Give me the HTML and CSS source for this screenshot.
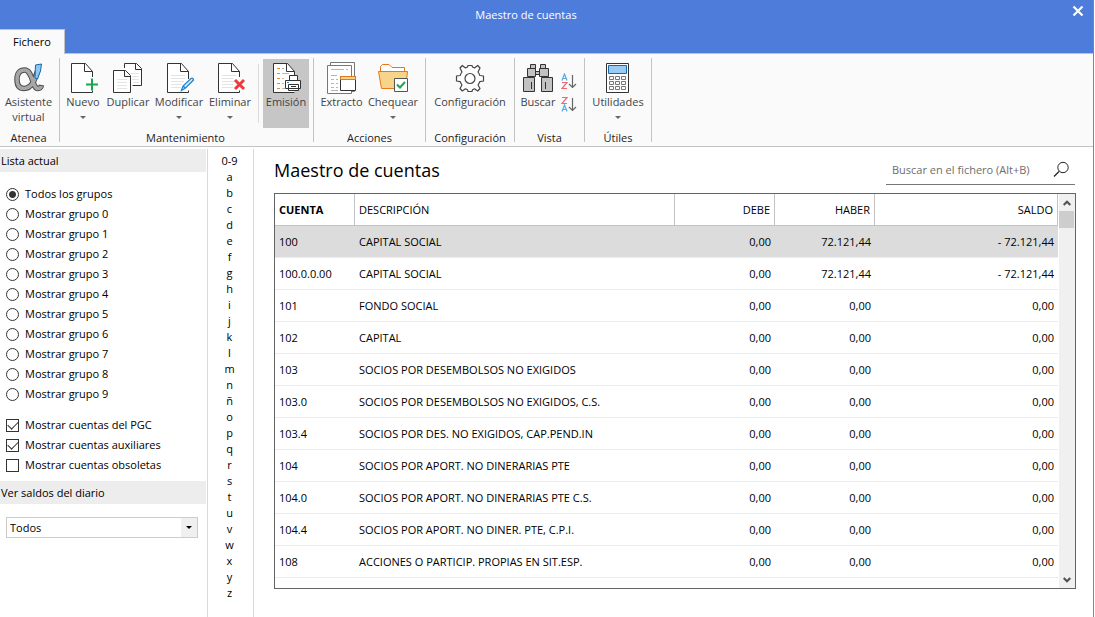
FILE: index.html
```html
<!DOCTYPE html>
<html lang="es">
<head>
<meta charset="utf-8">
<title>Maestro de cuentas</title>
<meta name="viewport" content="width=device-width, initial-scale=1">
<link rel="stylesheet" href="styles.css">
</head>
<body>
<div class="window">
  <header class="titlebar">
    <div class="title-row">
      <span class="title">Maestro de cuentas</span>
      <button class="close" type="button" aria-label="Cerrar">
        <svg width="12" height="12" viewBox="0 0 12 12"><path d="M1.500 1.500 10.500 10.500M10.500 1.500 1.500 10.500" stroke="#fff" stroke-width="2.200"/></svg>
      </button>
    </div>
    <button class="tab" type="button">Fichero</button>
  </header>

  <nav class="ribbon">
    <section class="group g-atenea">
      <div class="tools">
        <button class="tool" type="button">
          <svg width="32" height="32" viewBox="0 0 32 32" fill="none">
            <path d="M24.500 9C22 17 19 26.500 11 26.500 6 26.500 4 23 4 17.500 4 11 7 8 11.500 8 20 8 19 26.500 25 26.500 27 26.500 28 25.500 28.500 23" stroke="#4d4d4d" stroke-width="5.500"/>
            <path d="M24.500 10C22 17 19 26.500 11 26.500 6 26.500 4 23 4 17.500 4 11 7 8 11.500 8 20 8 19 26.500 25 26.500 27 26.500 28 25.500 28.300 24" stroke="#a6a6a6" stroke-width="3.500"/>
            <path d="M28.500 2 22.500 3 22 16 24.500 17 27.500 9Z" fill="#8ec8f2" stroke="#1769aa"/>
          </svg>
          <span>Asistente<br>virtual</span>
        </button>
      </div>
      <h2>Atenea</h2>
    </section>

    <section class="group g-mant">
      <div class="tools">
        <button class="tool w42" type="button">
          <svg width="32" height="32" viewBox="0 0 32 32" fill="none">
            <path d="M25.500 15V9.500L18.500 1.500H4.500V30.500H25.500V28.500M17.500 1.500V9.500H25.500" fill="#fff" stroke="#333"/>
            <path d="M25 16.500V28M19 22.500H31" stroke="#fafafa" stroke-width="4"/>
            <path d="M25 16.500V28.500M19 22.500H31" stroke="#17a84b" stroke-width="2"/>
          </svg>
          <span>Nuevo</span><i class="caret"></i>
        </button>
        <button class="tool w48" type="button">
          <svg width="32" height="32" viewBox="0 0 32 32" fill="none">
            <path d="M12.500 6V1.500H24.500L29.500 6.500V23.500H20.500M23.500 1.500V7.500H29.500" fill="#fff" stroke="#333"/>
            <path d="M18 11.500H27M20 14.500H27M20 17.500H27M21 20.500H27" stroke="#e4e4e4"/>
            <path d="M1.500 8.500H13.500L18.500 13.500V30.500H1.500ZM12.500 8.500V14.500H18.500" fill="#fff" stroke="#333"/>
            <path d="M5 17.500H15M5 20.500H15M5 23.500H15M5 26.500H15" stroke="#e4e4e4"/>
          </svg>
          <span>Duplicar</span>
        </button>
        <button class="tool w54" type="button">
          <svg width="32" height="32" viewBox="0 0 32 32" fill="none">
            <path d="M25.500 17V9.500L18.500 1.500H4.500V30.500H25.500V28.500M17.500 1.500V9.500H25.500" fill="#fff" stroke="#333"/>
            <path d="M8 13.500H22M8 16.500H22M8 19.500H21M8 22.500H19M8 25.500H18" stroke="#e4e4e4"/>
            <path d="M18.500 28.500 20 24 28 16.500Q30 15.500 30.500 18L22.500 26ZM20 24 22.500 26" fill="#d7ecfa" stroke="#1f86cf" stroke-width="1.300"/>
          </svg>
          <span>Modificar</span><i class="caret"></i>
        </button>
        <button class="tool w48" type="button">
          <svg width="32" height="32" viewBox="0 0 32 32" fill="none">
            <path d="M25.500 15V9.500L18.500 1.500H4.500V30.500H25.500V28.500M17.500 1.500V9.500H25.500" fill="#fff" stroke="#333"/>
            <path d="M8 13.500H22M8 16.500H19M8 19.500H20M8 22.500H19M8 25.500H19" stroke="#e4e4e4"/>
            <path d="M21 18 30 27M30 18 21 27" stroke="#f03a3a" stroke-width="3"/>
          </svg>
          <span>Eliminar</span><i class="caret"></i>
        </button>
        <span class="divider"></span>
        <button class="tool w46 selected" type="button">
          <svg width="32" height="32" viewBox="0 0 32 32" fill="none">
            <path d="M24.500 13V9.500L17.500 1.500H3.500V30.500H24.500M16.500 1.500V9.500H24.500" fill="#fff" stroke="#333"/>
            <path d="M7 6.500H10M7 11.500H10M7 16.500H10M7 21.500H10M7 26.500H10" stroke="#f08a1d"/>
            <path d="M12 6.500H14M12 11.500H19M12 16.500H14M12 21.500H14M12 26.500H15" stroke="#b9b9b9"/>
            <path d="M19.500 18.500V13.500H27.500V18.500M15.500 18.500H30.500V26.500H15.500ZM18.500 22.500H28.500V28.500H18.500ZM21 24.500H26M21 26.500H26" fill="#fff" stroke="#333"/>
            <path d="M17 20.500H19" stroke="#1f86cf"/>
          </svg>
          <span>Emisión</span>
        </button>
      </div>
      <h2>Mantenimiento</h2>
    </section>

    <section class="group g-acc">
      <div class="tools">
        <button class="tool w47" type="button">
          <svg width="32" height="32" viewBox="0 0 32 32" fill="none">
            <path d="M4.500 3V.500H28.500V29.500H26" stroke="#777" fill="#fff"/>
            <path d="M1.500 3.500H25.500V31.500H1.500Z" fill="#fff" stroke="#777"/>
            <path d="M5 7.500H18M20 7.500H22M5 13.500H11M5 17.500H8M10 17.500H12M5 21.500H8M10 21.500H12M5 25.500H8M10 25.500H12M5 28.500H12" stroke="#b5b5b5"/>
            <path d="M14.500 14.500H29.500V28.500H14.500Z" fill="#fff" stroke="#333"/>
            <path d="M14.500 14.500H29.500V17.500H14.500Z" fill="#f6d48a" stroke="#e8761c"/>
          </svg>
          <span>Extracto</span>
        </button>
        <button class="tool w56" type="button">
          <svg width="32" height="32" viewBox="0 0 32 32" fill="none">
            <path d="M3.500 9V4.500L5.500 2.500H12L15 5.500H27.500V9" fill="#fff" stroke="#e8761c"/>
            <path d="M1.500 9.500H30.500L28.500 26.500H4.500Z" fill="#f6d48a" stroke="#e8761c"/>
            <path d="M17.500 16.500H30.500V29.500H17.500Z" fill="#fff" stroke="#555"/>
            <path d="M20 22.500 23 25.500 28 20" stroke="#17a84b" stroke-width="2"/>
          </svg>
          <span>Chequear</span><i class="caret"></i>
        </button>
      </div>
      <h2>Acciones</h2>
    </section>

    <section class="group g-conf">
      <div class="tools">
        <button class="tool" type="button">
          <svg width="32" height="32" viewBox="0 0 32 32" fill="none" stroke="#444" stroke-width="1.200" stroke-linejoin="round">
            <path d="M8.300 3.500 11.500 6Q12.700 5.400 13.500 5L14 3.500H18L18.500 5 20.500 6 23.700 3.500 26 6 24 10Q25.500 12 25.800 13.500L29.500 14V19L25.800 19.700Q25.500 21 24 23L26 26.500 23.700 29 20.500 26.800 18.500 27.700 18 29.500H14L13.500 27.700 11.500 26.800 8.300 29 6 26.500 8 23Q6.500 21 6.200 19.700L2.500 19V14L6.200 13.500Q6.500 12 8 10L6 6Z" fill="#fff"/>
            <circle cx="16" cy="16.500" r="5"/>
          </svg>
          <span>Configuración</span>
        </button>
      </div>
      <h2>Configuración</h2>
    </section>

    <section class="group g-vista">
      <div class="tools">
        <button class="tool w40" type="button">
          <svg width="32" height="32" viewBox="0 0 32 32" fill="#c2c2c2" stroke="#333">
            <path d="M8.500 2.500H13.500V6.500H8.500ZM18.500 2.500H23.500V6.500H18.500ZM5.500 6.500H13.500V14.500H5.500ZM17.500 6.500H26.500V14.500H17.500ZM13.500 9.500H17.500V12.500H13.500ZM1.500 15.500H12.500V29.500H1.500ZM19.500 15.500H30.500V29.500H19.500ZM9.500 20V27M23.500 20V27"/>
          </svg>
          <span>Buscar</span>
        </button>
        <div class="sorts">
          <button type="button" aria-label="Orden ascendente">
            <svg width="16" height="17" viewBox="0 0 16 17" fill="none" stroke-width="1.200">
              <path d="M1 7.500 3.500 1 6 7.500M2 5.500H5" stroke="#58aee0"/><path d="M1 9.500H6L1 15.500H6" stroke="#f06a70"/>
              <path d="M11.500 2V14M8 11 11.500 14.500 15 11" stroke="#666"/>
            </svg>
          </button>
          <button type="button" aria-label="Orden descendente">
            <svg width="16" height="17" viewBox="0 0 16 17" fill="none" stroke-width="1.200">
              <path d="M1 1.500H6L1 7.500H6" stroke="#f06a70"/><path d="M1 15.500 3.500 9 6 15.500M2 13.500H5" stroke="#58aee0"/>
              <path d="M11.500 2V14M8 11 11.500 14.500 15 11" stroke="#666"/>
            </svg>
          </button>
        </div>
      </div>
      <h2>Vista</h2>
    </section>

    <section class="group g-util">
      <div class="tools">
        <button class="tool" type="button">
          <svg width="32" height="32" viewBox="0 0 32 32" fill="none">
            <path d="M4.500 1.500H26.500V30.500H4.500Z" fill="#fff" stroke="#333"/>
            <path d="M6.500 3.500H24.500V11.500H6.500Z" fill="#9accf3" stroke="#1769aa"/>
            <path d="M7.500 14.500H11.500V17.500H7.500ZM13.500 14.500H17.500V17.500H13.500ZM19.500 14.500H23.500V17.500H19.500ZM7.500 19.500H11.500V22.500H7.500ZM13.500 19.500H17.500V22.500H13.500ZM19.500 19.500H23.500V22.500H19.500ZM7.500 24.500H11.500V27.500H7.500ZM13.500 24.500H17.500V27.500H13.500ZM19.500 24.500H23.500V27.500H19.500Z" stroke="#777"/>
          </svg>
          <span>Utilidades</span><i class="caret"></i>
        </button>
      </div>
      <h2>Útiles</h2>
    </section>
  </nav>

  <div class="body">
    <aside class="sidebar">
      <h3>Lista actual</h3>
      <div class="options radios">
        <label><input type="radio" name="grupo" checked>Todos los grupos</label>
        <label><input type="radio" name="grupo">Mostrar grupo 0</label>
        <label><input type="radio" name="grupo">Mostrar grupo 1</label>
        <label><input type="radio" name="grupo">Mostrar grupo 2</label>
        <label><input type="radio" name="grupo">Mostrar grupo 3</label>
        <label><input type="radio" name="grupo">Mostrar grupo 4</label>
        <label><input type="radio" name="grupo">Mostrar grupo 5</label>
        <label><input type="radio" name="grupo">Mostrar grupo 6</label>
        <label><input type="radio" name="grupo">Mostrar grupo 7</label>
        <label><input type="radio" name="grupo">Mostrar grupo 8</label>
        <label><input type="radio" name="grupo">Mostrar grupo 9</label>
      </div>
      <div class="options checks">
        <label><input type="checkbox" checked>Mostrar cuentas del PGC</label>
        <label><input type="checkbox" checked>Mostrar cuentas auxiliares</label>
        <label><input type="checkbox">Mostrar cuentas obsoletas</label>
      </div>
      <h3><label for="diario">Ver saldos del diario</label></h3>
      <div class="combo">
        <select id="diario"><option>Todos</option></select>
        <span class="combo-arrow"><i></i></span>
      </div>
    </aside>

    <nav class="index">
      <a href="#">0-9</a><a href="#">a</a><a href="#">b</a><a href="#">c</a><a href="#">d</a><a href="#">e</a><a href="#">f</a><a href="#">g</a><a href="#">h</a><a href="#">i</a><a href="#">j</a><a href="#">k</a><a href="#">l</a><a href="#">m</a><a href="#">n</a><a href="#">ñ</a><a href="#">o</a><a href="#">p</a><a href="#">q</a><a href="#">r</a><a href="#">s</a><a href="#">t</a><a href="#">u</a><a href="#">v</a><a href="#">w</a><a href="#">x</a><a href="#">y</a><a href="#">z</a>
    </nav>

    <main class="content">
      <div class="heading">
        <h1>Maestro de cuentas</h1>
        <div class="search">
          <input type="text" placeholder="Buscar en el fichero (Alt+B)" aria-label="Buscar en el fichero">
          <svg width="17" height="17" viewBox="0 0 17 17" fill="none" stroke="#222"><circle cx="10" cy="6.500" r="5.200"/><path d="M6 10.500 1 15.500" stroke-width="1.200"/></svg>
        </div>
      </div>
      <div class="grid">
        <table>
          <colgroup><col class="c-cuenta"><col class="c-desc"><col class="c-num"><col class="c-num"><col></colgroup>
          <thead><tr><th class="sorted">CUENTA</th><th>DESCRIPCIÓN</th><th class="num">DEBE</th><th class="num">HABER</th><th class="num">SALDO</th></tr></thead>
          <tbody>
            <tr class="current"><td>100</td><td>CAPITAL SOCIAL</td><td>0,00</td><td>72.121,44</td><td>- 72.121,44</td></tr>
            <tr><td>100.0.0.00</td><td>CAPITAL SOCIAL</td><td>0,00</td><td>72.121,44</td><td>- 72.121,44</td></tr>
            <tr><td>101</td><td>FONDO SOCIAL</td><td>0,00</td><td>0,00</td><td>0,00</td></tr>
            <tr><td>102</td><td>CAPITAL</td><td>0,00</td><td>0,00</td><td>0,00</td></tr>
            <tr><td>103</td><td>SOCIOS POR DESEMBOLSOS NO EXIGIDOS</td><td>0,00</td><td>0,00</td><td>0,00</td></tr>
            <tr><td>103.0</td><td>SOCIOS POR DESEMBOLSOS NO EXIGIDOS, C.S.</td><td>0,00</td><td>0,00</td><td>0,00</td></tr>
            <tr><td>103.4</td><td>SOCIOS POR DES. NO EXIGIDOS, CAP.PEND.IN</td><td>0,00</td><td>0,00</td><td>0,00</td></tr>
            <tr><td>104</td><td>SOCIOS POR APORT. NO DINERARIAS PTE</td><td>0,00</td><td>0,00</td><td>0,00</td></tr>
            <tr><td>104.0</td><td>SOCIOS POR APORT. NO DINERARIAS PTE C.S.</td><td>0,00</td><td>0,00</td><td>0,00</td></tr>
            <tr><td>104.4</td><td>SOCIOS POR APORT. NO DINER. PTE, C.P.I.</td><td>0,00</td><td>0,00</td><td>0,00</td></tr>
            <tr><td>108</td><td>ACCIONES O PARTICIP. PROPIAS EN SIT.ESP.</td><td>0,00</td><td>0,00</td><td>0,00</td></tr>
          </tbody>
        </table>
        <div class="scrollbar">
          <button type="button" aria-label="Subir"><svg width="8" height="6" viewBox="0 0 8 6" fill="none" stroke="#505050" stroke-width="2"><path d="M.700 5 4 1.700 7.300 5"/></svg></button>
          <div class="thumb"></div>
          <button class="down" type="button" aria-label="Bajar"><svg width="8" height="6" viewBox="0 0 8 6" fill="none" stroke="#505050" stroke-width="2"><path d="M.700 1 4 4.300 7.300 1"/></svg></button>
        </div>
      </div>
    </main>
  </div>
</div>
</body>
</html>
```
FILE: styles.css
```css
* { box-sizing: border-box; }
body {
  margin: 0;
  background: #fff;
  color: #000;
  font: 11px/16px "Open Sans", "Noto Sans", sans-serif;
}
h1, h2, h3 { margin: 0; font-size: 11px; font-weight: 400; }
button, input, select { font: inherit; color: inherit; }
button { border: 0; padding: 0; background: none; }
svg { display: block; }

.window {
  display: flex;
  flex-direction: column;
  min-height: 100vh;
  margin-right: 1px;
  border-right: 1px solid #858585;
}

/* Title bar */
.titlebar { background: #4d7cdb; border-bottom: 1px solid #c3c3c3; }
.title-row { display: flex; height: 29px; }
.title { flex: 1; color: #fff; text-align: center; line-height: 30px; }
.close { display: flex; justify-content: center; align-items: center; width: 41px; height: 22px; padding-left: 10px; }
.tab {
  display: block;
  width: 65px;
  height: 25px;
  margin-bottom: -1px;
  background: #fafafa;
  border: 1px solid #c3c3c3;
  border-width: 1px 1px 0 0;
}

/* Ribbon */
.ribbon {
  display: flex;
  padding: 4px 0;
  background: #fafafa;
  border-bottom: 1px solid #c3c3c3;
}
.group {
  display: flex;
  flex-direction: column;
  flex: none;
  border-right: 1px solid #c3c3c3;
}
.group h2 { height: 14px; text-align: center; line-height: 20px; color: #222; }
.tools { display: flex; height: 69px; margin-top: 1px; }
.tool {
  display: flex;
  flex-direction: column;
  align-items: center;
  width: 100%;
  padding-top: 3px;
  color: #444;
  line-height: 15px;
  white-space: nowrap;
}
.tool svg { flex: none; }
.tool.selected { background: #c6c6c6; }
.caret {
  margin-top: 7px;
  border: solid transparent;
  border-width: 3px 3px 0;
  border-top-color: #666;
}
.divider { width: 1px; margin: 5px 4px; background: #dcdcdc; }
.w40 { width: 40px; }
.w42 { width: 42px; }
.w46 { width: 46px; }
.w47 { width: 47px; }
.w48 { width: 48px; }
.w54 { width: 54px; }
.w56 { width: 56px; }
.g-atenea { width: 60px; padding-right: 2px; }
.g-mant { padding: 0 4px 0 2px; }
.g-mant .tool { flex: none; }
.g-acc { padding: 0 4px; }
.g-conf { width: 89px; }
.g-vista { width: 70px; }
.g-vista .tools { padding-left: 3px; gap: 3px; }
.g-util { width: 67px; }
.sorts { display: flex; flex-direction: column; gap: 6px; padding-top: 14px; }

/* Body */
.body { display: flex; flex: 1; padding-top: 2px; }
.sidebar { flex: none; width: 208px; border-right: 1px solid #d9d9d9; }
.sidebar h3 { margin-right: 1px; padding-left: 1px; background: #ededed; line-height: 23px; }
.options label { display: flex; align-items: center; gap: 6px; height: 20px; padding-left: 6px; }
.options input {
  flex: none;
  appearance: none;
  width: 13px;
  height: 13px;
  margin: 0;
  border: 1px solid #333;
  background: #fff;
}
.radios { padding-top: 12px; }
.checks { padding: 11px 0 6px; }
.options input[type="radio"] { border-radius: 50%; }
.options input[type="radio"]:checked { background: radial-gradient(circle, #333 3px, #fff 4px); }
.options input[type="checkbox"] { display: grid; place-items: center; }
.options input[type="checkbox"]:checked::before {
  content: "";
  width: 9px;
  height: 5px;
  margin-bottom: 3px;
  border: solid #333;
  border-width: 0 0 1px 1px;
  transform: rotate(-45deg);
}
.combo { display: flex; margin: 13px 9px 0 6px; border: 1px solid #ccc; }
.combo select {
  flex: 1;
  appearance: none;
  height: 19px;
  padding: 0 3px;
  border: 0;
  background: #fff;
}
.combo-arrow { display: grid; place-items: center; width: 16px; background: #f0f0f0; }
.combo-arrow i { border: solid transparent; border-width: 3px 3px 0; border-top-color: #000; }

.index {
  display: flex;
  flex-direction: column;
  flex: none;
  width: 46px;
  padding: 4px 2px 0 0;
  text-align: center;
  border-right: 1px solid #d9d9d9;
}
.index a { color: #000; text-decoration: none; }

.content { flex: 1; min-width: 0; padding: 6px 17px 28px 20px; }
.heading { display: flex; justify-content: space-between; align-items: flex-start; height: 38px; }
h1 { font-size: 18px; line-height: 30px; }
.search { display: flex; align-items: center; width: 189px; height: 30px; margin-right: 1px; padding: 0 5px 0 6px; border-bottom: 1px solid #777; }
.search input { flex: 1; min-width: 0; padding: 0; border: 0; outline: 0; background: none; }
.search input::placeholder { color: #6e6e6e; opacity: 1; }

/* Accounts table */
.grid { display: flex; justify-content: space-between; gap: 1px; border: 1px solid #646464; }
table { flex: 1; table-layout: fixed; width: 100%; margin-bottom: 10px; border-collapse: separate; border-spacing: 0; }
.c-cuenta { width: 80px; }
.c-desc { width: 320px; }
.c-num { width: 100px; }
th, td { height: 32px; padding: 0 4px; text-align: left; font-weight: 400; white-space: nowrap; }
th { border-right: 1px solid #c3c3c3; border-bottom: 1px solid #c3c3c3; }
th.sorted { font-weight: 700; }
td { border-bottom: 1px solid #ededed; }
th.num, td:nth-child(n+3) { text-align: right; }
.current td { background: #dcdcdc; }
.scrollbar { display: flex; flex-direction: column; flex: none; width: 16px; background: #f0f0f0; }
.scrollbar button { display: grid; place-items: center; height: 17px; }
.thumb { height: 17px; margin-right: 1px; background: #cdcdcd; }
.scrollbar .down { margin-top: auto; }
```
